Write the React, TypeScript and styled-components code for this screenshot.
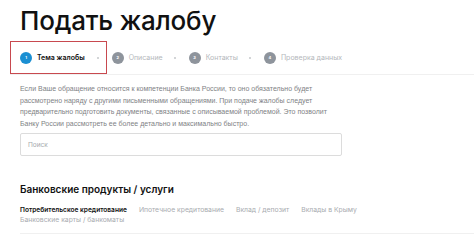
import React from 'react';
import styled, { createGlobalStyle } from 'styled-components';

const GlobalStyle = createGlobalStyle`
  html, body {
    margin: 0;
    padding: 0;
    background: #ffffff;
  }
  body {
    font-family: Inter, "Noto Sans", sans-serif;
    color: #111;
    overflow: hidden;
  }
`;

const Page = styled.div`
  width: 474px;
  height: 240px;
  padding: 0 0 0 20px;
  box-sizing: border-box;
  overflow: hidden;
`;

const Title = styled.h1`
  margin: 0;
  padding-top: 5px;
  font-size: 26px;
  font-weight: 500;
  line-height: 32px;
  letter-spacing: -0.2px;
  color: #111;
`;

const Stepper = styled.div`
  display: flex;
  align-items: center;
  margin: 4px 0 0 -10px;
  height: 33px;
  border-bottom: 1px solid #f0f0f0;
`;

const Highlight = styled.div`
  display: flex;
  align-items: center;
  box-sizing: border-box;
  height: 33px;
  padding-left: 9px;
  padding-right: 7px;
  margin-right: 5px;
  border: 1px solid #c8494f;
`;

const Step = styled.div`
  display: flex;
  align-items: center;
  gap: 5px;
`;

const Circle = styled.span<{ $active?: boolean }>`
  display: inline-flex;
  align-items: center;
  justify-content: center;
  width: 12px;
  height: 12px;
  border-radius: 50%;
  background: ${(p) => (p.$active ? '#1b8fd2' : '#8e949c')};
  color: #fff;
  font-size: 4px;
  font-weight: 700;
`;

const StepLabel = styled.span<{ $active?: boolean }>`
  font-size: 7px;
  font-weight: ${(p) => (p.$active ? 600 : 400)};
  color: ${(p) => (p.$active ? '#111' : '#b4b7bb')};
`;

const Dot = styled.span<{ $last?: boolean }>`
  width: 2px;
  height: 2px;
  border-radius: 50%;
  background: #c4c7ca;
  margin: ${(p) => (p.$last ? '0 0 0 12px' : '0 13px 0 11px')};
`;

const Intro = styled.p`
  margin: 8px 0 0;
  font-family: "Liberation Sans", Arial, sans-serif;
  font-size: 7px;
  line-height: 11.5px;
  color: #808285;
  white-space: nowrap;
`;

const Search = styled.div`
  margin-top: 4px;
  width: 322px;
  height: 23px;
  box-sizing: border-box;
  border: 1px solid #dcdcdc;
  border-radius: 2px;
  display: flex;
  align-items: center;
  padding-left: 7px;
  font-size: 6.5px;
  color: #a5a8ac;
`;

const SectionTitle = styled.h2`
  margin: 26px 0 0;
  font-size: 10px;
  font-weight: 600;
  line-height: 14px;
  color: #111;
`;

const TabsBar = styled.div`
  margin-top: 9px;
  padding-bottom: 8px;
  border-bottom: 1px solid #f0f0f0;
`;

const Tabs = styled.div`
  display: flex;
  flex-wrap: wrap;
  column-gap: 12px;
  width: 380px;
`;

const Tab = styled.span<{ $active?: boolean }>`
  font-size: ${(p) => (p.$active ? '6.6px' : '6.8px')};
  line-height: 10px;
  font-weight: ${(p) => (p.$active ? 600 : 400)};
  color: ${(p) => (p.$active ? '#111111' : '#a9acb0')};
`;

const steps = ['Описание', 'Контакты', 'Проверка данных'];
const tabs = [
  'Ипотечное кредитование',
  'Вклад / депозит',
  'Вклады в Крыму',
  'Банковские карты / банкоматы',
];

export default function App() {
  return (
    <Page>
      <GlobalStyle />
      <Title>Подать жалобу</Title>
      <Stepper>
        <Highlight>
          <Step>
            <Circle $active>1</Circle>
            <StepLabel $active>Тема жалобы</StepLabel>
          </Step>
          <Dot $last />
        </Highlight>
        {steps.map((s, i) => (
          <React.Fragment key={s}>
            <Step>
              <Circle>{i + 2}</Circle>
              <StepLabel>{s}</StepLabel>
            </Step>
            {i < steps.length - 1 && <Dot />}
          </React.Fragment>
        ))}
      </Stepper>
      <Intro>
        Если Ваше обращение относится к компетенции Банка России, то оно обязательно будет
        <br />
        рассмотрено наряду с другими письменными обращениями. При подаче жалобы следует
        <br />
        предварительно подготовить документы, связанные с описываемой проблемой. Это позволит
        <br />
        Банку России рассмотреть ее более детально и максимально быстро.
      </Intro>
      <Search>Поиск</Search>
      <SectionTitle>Банковские продукты / услуги</SectionTitle>
      <TabsBar>
        <Tabs>
          <Tab $active>Потребительское кредитование</Tab>
          {tabs.map((t) => (
            <Tab key={t}>{t}</Tab>
          ))}
        </Tabs>
      </TabsBar>
    </Page>
  );
}
